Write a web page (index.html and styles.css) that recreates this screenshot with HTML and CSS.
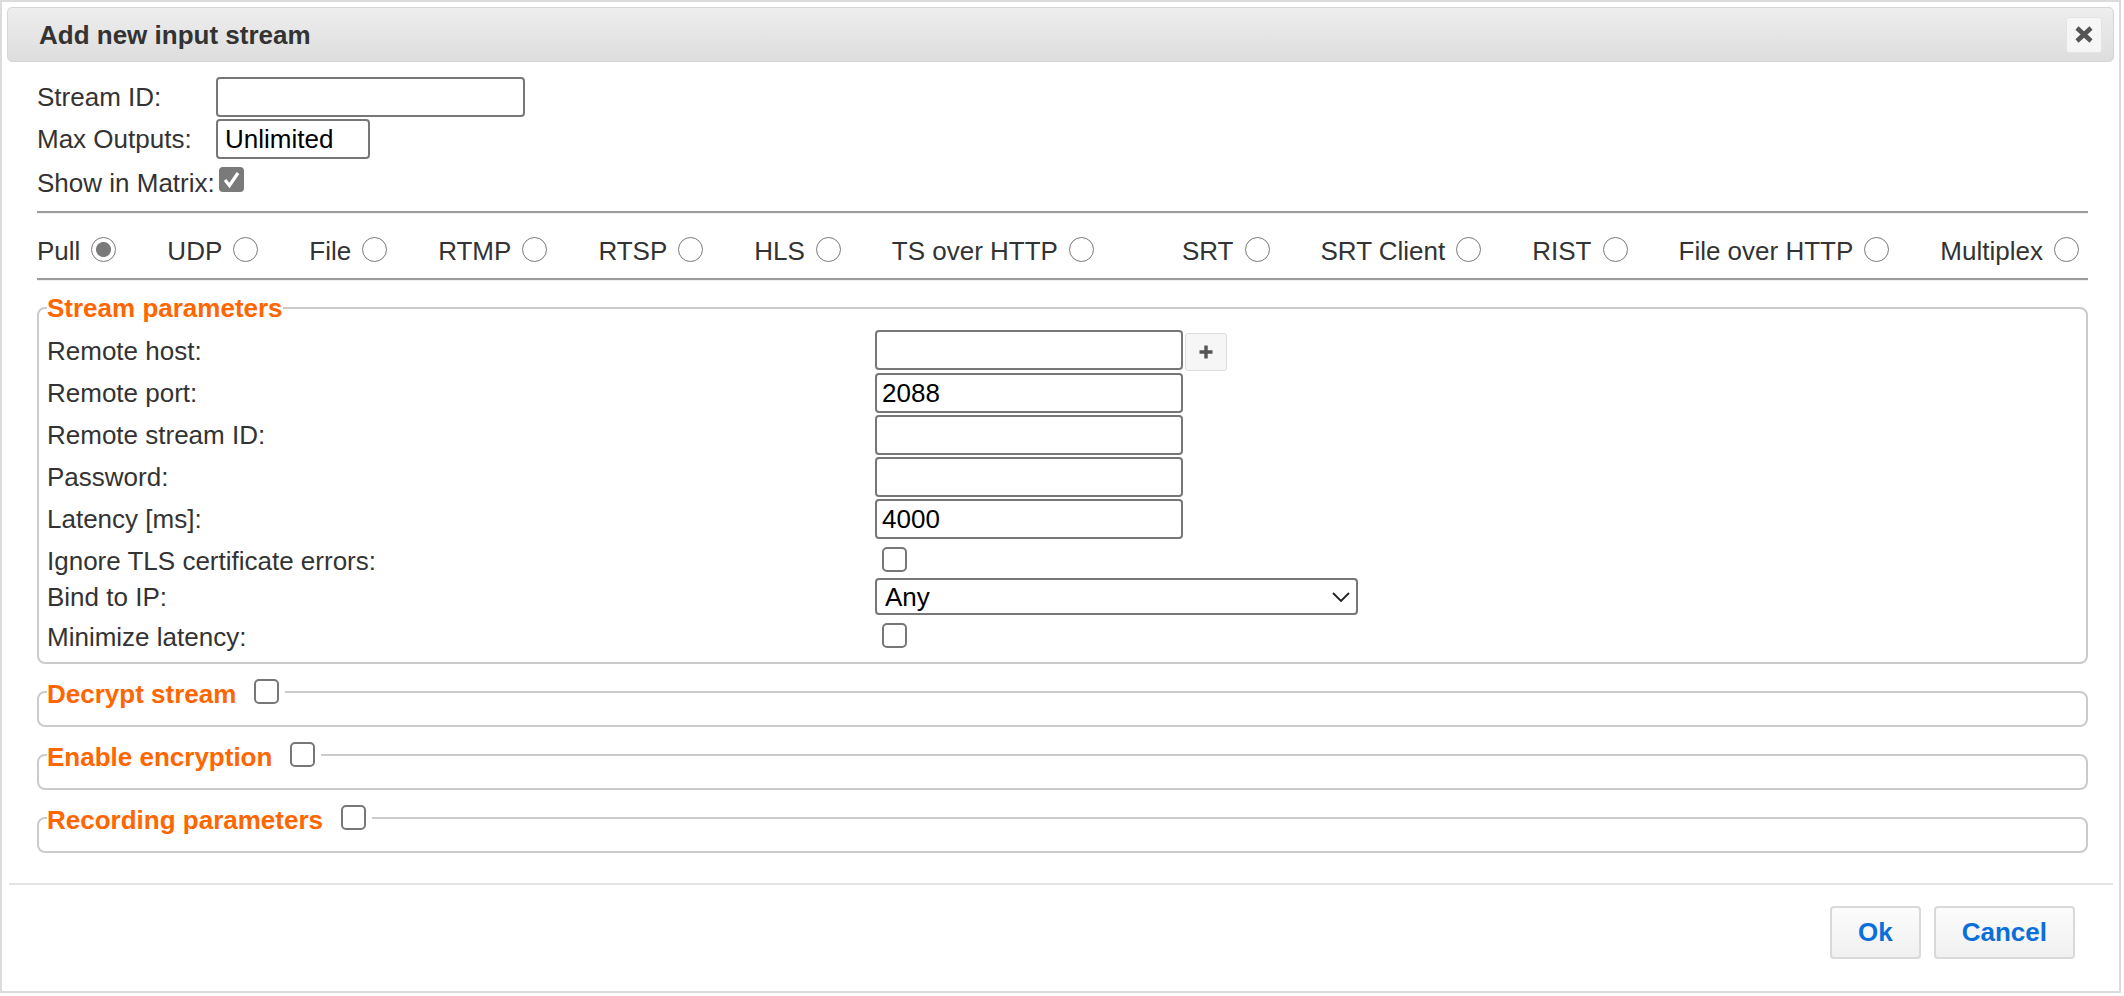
FILE: index.html
```html
<!DOCTYPE html>
<html lang="en">
<head>
    <meta charset="UTF-8">
    <title>Add new input stream</title>
    <link rel="stylesheet" href="styles.css">
</head>
<body>
    <div class="dialog">
        <div class="titlebar">
            <span class="title">Add new input stream</span>
            <button class="close" type="button">
                <svg width="20" height="19" viewBox="0 0 20 19"><path d="M3 3L17 16M17 3L3 16" stroke="#555" stroke-width="4.6" fill="none"/></svg>
            </button>
        </div>

        <div class="content">
            <div class="general">
                <label>Stream ID:</label>
                <input type="text" class="field field-id">
                <label>Max Outputs:</label>
                <input type="text" class="field field-max" value="Unlimited">
            </div>
            <div class="matrix">
                <span>Show in Matrix:</span>
                <svg class="tick" width="25" height="25" viewBox="0 0 25 25"><rect x="0" y="0" width="25" height="25" rx="4" fill="#7a7a7a"/><path d="M6 13L10.5 18.5L19 6" stroke="#fff" stroke-width="3.2" fill="none"/></svg>
            </div>
            <hr class="rule">
            <div class="types">
                <label class="type">Pull<input type="radio" name="type" class="radio" checked></label>
                <label class="type">UDP<input type="radio" name="type" class="radio"></label>
                <label class="type">File<input type="radio" name="type" class="radio"></label>
                <label class="type">RTMP<input type="radio" name="type" class="radio"></label>
                <label class="type">RTSP<input type="radio" name="type" class="radio"></label>
                <label class="type">HLS<input type="radio" name="type" class="radio"></label>
                <label class="type type-wide">TS over HTTP<input type="radio" name="type" class="radio"></label>
                <label class="type">SRT<input type="radio" name="type" class="radio"></label>
                <label class="type">SRT Client<input type="radio" name="type" class="radio"></label>
                <label class="type">RIST<input type="radio" name="type" class="radio"></label>
                <label class="type">File over HTTP<input type="radio" name="type" class="radio"></label>
                <label class="type">Multiplex<input type="radio" name="type" class="radio"></label>
            </div>
            <hr class="rule rule-low">

            <fieldset class="group">
                <legend>Stream parameters</legend>
                <div class="params">
                    <label>Remote host:</label>
                    <div class="host">
                        <input type="text" class="field field-param">
                        <button class="add" type="button">
                            <svg width="16" height="16" viewBox="0 0 16 16"><path d="M8 1.5v13M1.5 8h13" stroke="#555" stroke-width="3.4" fill="none"/></svg>
                        </button>
                    </div>
                    <label>Remote port:</label>
                    <input type="text" class="field field-param" value="2088">
                    <label>Remote stream ID:</label>
                    <input type="text" class="field field-param">
                    <label>Password:</label>
                    <input type="password" class="field field-param">
                    <label>Latency [ms]:</label>
                    <input type="text" class="field field-param" value="4000">
                    <label class="label-check">Ignore TLS certificate errors:</label>
                    <input type="checkbox" class="check check-param">
                    <label>Bind to IP:</label>
                    <div class="select-wrap">
                        <select class="select">
                            <option>Any</option>
                        </select>
                        <svg class="chevron" width="18" height="10" viewBox="0 0 18 10"><polyline points="1,1 9,9 17,1" stroke="#222" stroke-width="1.8" fill="none"/></svg>
                    </div>
                    <label class="label-check">Minimize latency:</label>
                    <input type="checkbox" class="check check-param">
                </div>
            </fieldset>

            <fieldset class="group group-closed">
                <legend><span class="legend-text">Decrypt stream</span><input type="checkbox" class="check check-legend"></legend>
            </fieldset>
            <fieldset class="group group-closed">
                <legend><span class="legend-text">Enable encryption</span><input type="checkbox" class="check check-legend"></legend>
            </fieldset>
            <fieldset class="group group-closed">
                <legend><span class="legend-text">Recording parameters</span><input type="checkbox" class="check check-legend"></legend>
            </fieldset>
        </div>

        <div class="buttonpane">
            <button class="btn" type="button">Ok</button>
            <button class="btn" type="button">Cancel</button>
        </div>
    </div>
</body>
</html>
```

FILE: styles.css
```css
body {
    margin: 0;
    font-family: 'Liberation Sans', Arial, sans-serif;
    font-size: 26px;
    color: #333;
    background-color: #ffffff;
}

.dialog {
    width: 2121px;
    box-sizing: border-box;
    border: 2px solid #dcdcdc;
    padding: 5px;
}

.titlebar {
    display: flex;
    align-items: center;
    justify-content: space-between;
    height: 55px;
    box-sizing: border-box;
    padding: 0 11px 0 31px;
    border: 1px solid #d6d6d6;
    border-radius: 5px;
    background: linear-gradient(#eeeeee, #dddddd);
}

.title {
    font-weight: bold;
    line-height: 30px;
}

.close {
    display: flex;
    align-items: center;
    justify-content: center;
    width: 36px;
    height: 36px;
    padding: 0;
    box-sizing: border-box;
    border: 1px solid #e4e4e4;
    border-radius: 3px;
    background-color: #f6f6f6;
}

.content {
    padding: 15px 26px 30px 30px;
}

.general {
    display: grid;
    grid-template-columns: 179px auto;
    row-gap: 2px;
    align-items: center;
    justify-items: start;
    line-height: 30px;
}

.field {
    height: 40px;
    box-sizing: border-box;
    border: 2px solid #777;
    border-radius: 4px;
    padding: 0 5px;
    font-family: inherit;
    font-size: 26px;
    color: #000;
    outline: none;
}

.field-id {
    width: 309px;
}

.field-max {
    width: 154px;
    padding: 0 7px;
}

.field-param {
    width: 308px;
}

.matrix {
    display: flex;
    align-items: center;
    height: 30px;
    margin-top: 9px;
    line-height: 30px;
}

.tick {
    margin: 0 0 7px 4px;
}

.rule {
    height: 0;
    margin: 13px 0 0;
    border: 0;
    border-top: 2px solid #9c9c9c;
    border-bottom: 1px solid #f0f0f0;
}

.rule-low {
    margin-top: 12px;
}

.types {
    display: flex;
    gap: 51px;
    margin-top: 22px;
    line-height: 30px;
}

.type {
    display: flex;
    align-items: center;
    white-space: nowrap;
}

.type-wide {
    margin-right: 37px;
}

.radio {
    appearance: none;
    width: 25px;
    height: 25px;
    margin: 0 0 3px 11px;
    box-sizing: border-box;
    border: 1.5px solid #7a7a7a;
    border-radius: 50%;
    background-color: #fff;
}

.radio:checked {
    background: radial-gradient(circle, #7a7a7a 0 7px, #fff 8px);
}

.group {
    margin: 12px 0 0;
    padding: 7px 8px 10px;
    border: 2px solid #cbcbcb;
    border-radius: 8px;
    min-inline-size: 0;
}

.group legend {
    padding: 0;
    line-height: 30px;
    font-weight: bold;
    color: #f60;
}

.group-closed {
    margin-top: 15px;
    padding-top: 11px;
}

.group-closed legend {
    display: flex;
    align-items: flex-start;
    height: 25px;
}

.legend-text {
    line-height: 30px;
    white-space: nowrap;
}

.params {
    display: grid;
    grid-template-columns: 828px auto;
    row-gap: 2px;
    align-items: center;
    justify-items: start;
    line-height: 30px;
}

.label-check {
    padding-top: 5px;
}

.host {
    display: flex;
    align-items: flex-start;
}

.add {
    display: flex;
    align-items: center;
    justify-content: center;
    width: 42px;
    height: 38px;
    margin: 3px 0 0 2px;
    padding: 0;
    box-sizing: border-box;
    border: 1px solid #dddddd;
    border-radius: 3px;
    background-color: #f6f6f6;
}

.check {
    appearance: none;
    width: 25px;
    height: 25px;
    box-sizing: border-box;
    border: 2px solid #777;
    border-radius: 5px;
    background-color: #fff;
}

.check-param {
    margin: 6px 0 4px 7px;
}

.check-legend {
    flex: none;
    margin: 0 6px 0 18px;
}

.select-wrap {
    position: relative;
    height: 37px;
}

.select {
    appearance: none;
    width: 483px;
    height: 37px;
    box-sizing: border-box;
    border: 2px solid #777;
    border-radius: 4px;
    padding: 0 8px;
    font-family: inherit;
    font-size: 26px;
    color: #000;
    background-color: #fff;
}

.chevron {
    position: absolute;
    right: 8px;
    top: 14px;
    pointer-events: none;
}

.buttonpane {
    display: flex;
    justify-content: flex-end;
    gap: 13px;
    margin: 0 1px 0 2px;
    padding: 21px 38px 27px 0;
    border-top: 2px solid #e4e4e4;
}

.btn {
    height: 53px;
    padding: 0 26px;
    border: 2px solid #d9d9d9;
    border-radius: 4px;
    background: linear-gradient(#fcfcfc, #f0f0f0);
    font-family: inherit;
    font-size: 26px;
    font-weight: bold;
    color: #0a6fd9;
}
```
